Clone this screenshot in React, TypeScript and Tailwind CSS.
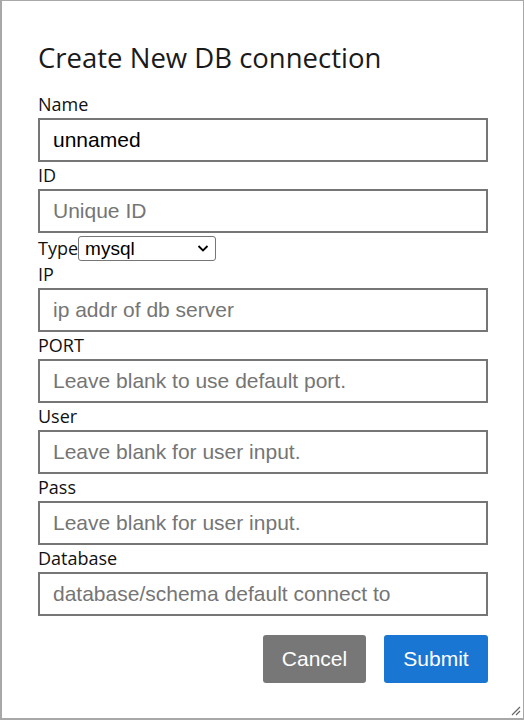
import React from 'react';

const fields = [
  { label: 'IP', placeholder: 'ip addr of db server' },
  { label: 'PORT', placeholder: 'Leave blank to use default port.' },
  { label: 'User', placeholder: 'Leave blank for user input.' },
  { label: 'Pass', placeholder: 'Leave blank for user input.' },
  { label: 'Database', placeholder: 'database/schema default connect to' },
];

const labelCls = "block text-[18px] leading-[27px] text-[#111] font-['Open_Sans',sans-serif]";
const inputCls =
  "block w-full h-[44px] border-2 border-[#767676] px-[13px] text-[21px] text-black placeholder:text-[#757575] outline-none font-['Liberation_Sans',Arial,sans-serif]";

function Field({ label, placeholder, value }: { label: string; placeholder: string; value?: string }) {
  return (
    <div>
      <label className={labelCls}>{label}</label>
      <input className={inputCls} placeholder={placeholder} defaultValue={value} />
    </div>
  );
}

export default function App() {
  return (
    <div className="relative w-[524px] h-[720px] bg-white border-l-2 border-t border-b-2 border-r border-[#a8a8a8] pl-[36px] pr-[35px] pt-[37px]">
      <h1 className="text-[27.5px] leading-[40px] text-[#1a1a1a] font-['Open_Sans',sans-serif] mb-[13px]">
        Create New DB connection
      </h1>
      <form className="flex flex-col">
        <Field label="Name" placeholder="" value="unnamed" />
        <Field label="ID" placeholder="Unique ID" />
        <div className="flex items-center mt-[3px] h-[25px]">
          <span className="text-[18px] text-[#111] font-['Open_Sans',sans-serif]">Type</span>
          <div className="relative w-[138px] h-[25px] border border-[#767676] rounded-[3px]">
            <span className="absolute left-[6px] top-0 leading-[23px] text-[19px] text-black font-['Liberation_Sans',Arial,sans-serif]">mysql</span>
            <svg className="absolute right-[6px] top-[7px]" width="12" height="9" viewBox="0 0 12 9">
              <path d="M1.5 2 L6 6.5 L10.5 2" fill="none" stroke="#000" strokeWidth="1.8" />
            </svg>
          </div>
        </div>
        {fields.map((f) => (
          <Field key={f.label} label={f.label} placeholder={f.placeholder} />
        ))}
        <div className="flex justify-end gap-[18px] mt-[19px]">
          <button type="button" className="w-[103px] h-[48px] rounded-[3px] bg-[#777777] text-white text-[21px] font-['Liberation_Sans',Arial,sans-serif]">
            Cancel
          </button>
          <button type="button" className="w-[104px] h-[48px] rounded-[3px] bg-[#1976d2] text-white text-[21px] font-['Liberation_Sans',Arial,sans-serif]">
            Submit
          </button>
        </div>
      </form>
      <svg className="absolute right-[2px] bottom-[2px]" width="12" height="12" viewBox="0 0 12 12">
        <path d="M11 3 L3 11 M11 7 L7 11" stroke="#666" strokeWidth="1.2" />
      </svg>
    </div>
  );
}
